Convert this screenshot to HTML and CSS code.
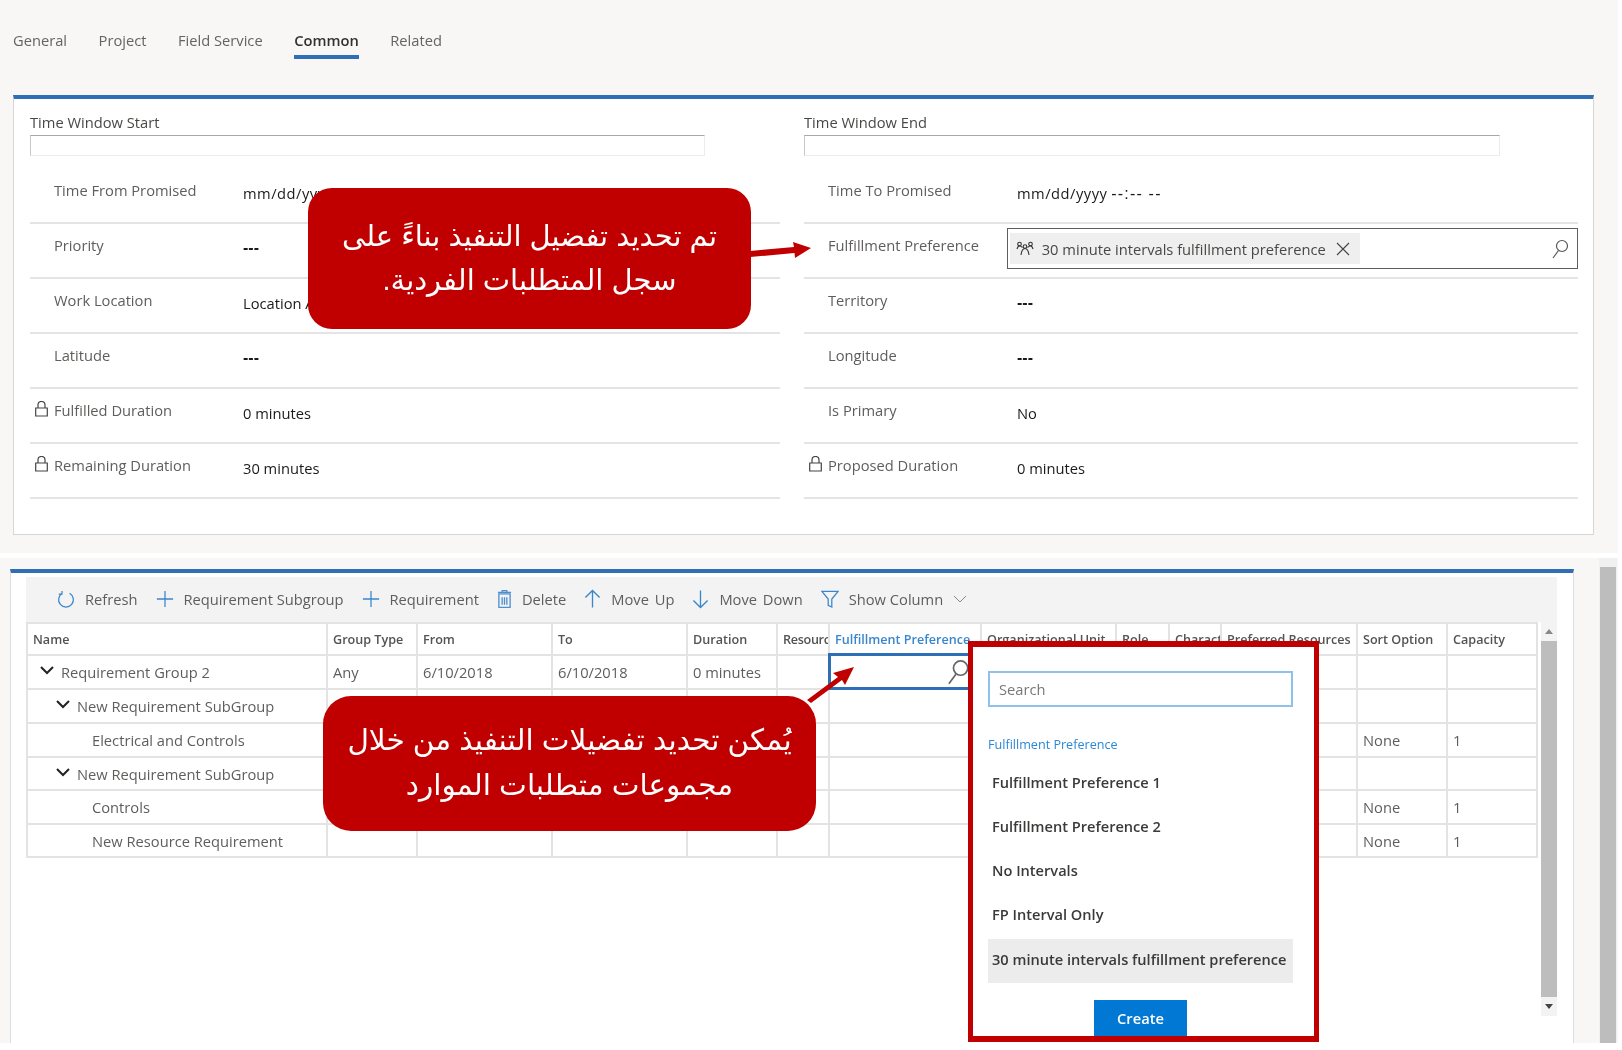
FILE: index.html
```html
<!DOCTYPE html>
<html lang="en">
<head>
  <meta charset="UTF-8">
  <title>Requirement Group</title>
  <link rel="stylesheet" href="styles.css">
</head>
<body>
  <div class="screen">
    <nav class="tabs">
      <a class="tab">General</a>
      <a class="tab">Project</a>
      <a class="tab">Field Service</a>
      <a class="tab active">Common</a>
      <a class="tab">Related</a>
    </nav>

    <section class="card">
      <div class="column">
        <div class="section-label">Time Window Start</div>
        <div class="section-box"></div>
        <div class="row"><span class="slot"></span><span class="label">Time From Promised</span><span class="value"><span class="date">mm/dd/yyyy</span> <span class="dash time">--:-- --</span></span></div>
        <div class="row"><span class="slot"></span><span class="label">Priority</span><span class="value dash">---</span></div>
        <div class="row"><span class="slot"></span><span class="label">Work Location</span><span class="value">Location Agnostic</span></div>
        <div class="row"><span class="slot"></span><span class="label">Latitude</span><span class="value dash">---</span></div>
        <div class="row">
          <span class="slot"><svg class="lock" viewBox="0 0 13 16"><path d="M3 7V4a3.5 3.5 0 0 1 7 0v3M.7 7h11.6v8H.7z"/></svg></span>
          <span class="label">Fulfilled Duration</span><span class="value">0 minutes</span>
        </div>
        <div class="row">
          <span class="slot"><svg class="lock" viewBox="0 0 13 16"><path d="M3 7V4a3.5 3.5 0 0 1 7 0v3M.7 7h11.6v8H.7z"/></svg></span>
          <span class="label">Remaining Duration</span><span class="value">30 minutes</span>
        </div>
      </div>
      <div class="column right">
        <div class="section-label">Time Window End</div>
        <div class="section-box"></div>
        <div class="row"><span class="slot"></span><span class="label">Time To Promised</span><span class="value"><span class="date">mm/dd/yyyy</span> <span class="dash time">--:-- --</span></span></div>
        <div class="row">
          <span class="slot"></span><span class="label">Fulfillment Preference</span>
          <div class="lookup">
            <div class="chip">
              <svg class="people" viewBox="0 0 18 16"><circle cx="3.5" cy="3" r="1.8"/><circle cx="14.5" cy="3" r="1.8"/><circle cx="9" cy="5.5" r="1.8"/><path d="M1 8c.5-2 1.500-3 2.500-3s2 .5 3 1.500M17 8c-.5-2-1.500-3-2.500-3s-2 .5-3 1.500M5 14c.5-4 2-6.500 4-6.500s3.500 2.500 4 6.500"/></svg>
              <span>30 minute intervals fulfillment preference</span>
              <svg class="close" viewBox="0 0 14 14"><path d="M1 1l12 12M13 1L1 13"/></svg>
            </div>
            <svg class="search" viewBox="0 0 18 20"><circle cx="11" cy="7" r="5.500"/><path d="M7.500 11.500L2 19"/></svg>
          </div>
        </div>
        <div class="row"><span class="slot"></span><span class="label">Territory</span><span class="value dash">---</span></div>
        <div class="row"><span class="slot"></span><span class="label">Longitude</span><span class="value dash">---</span></div>
        <div class="row"><span class="slot"></span><span class="label">Is Primary</span><span class="value">No</span></div>
        <div class="row">
          <span class="slot"><svg class="lock" viewBox="0 0 13 16"><path d="M3 7V4a3.5 3.5 0 0 1 7 0v3M.7 7h11.6v8H.7z"/></svg></span>
          <span class="label">Proposed Duration</span><span class="value">0 minutes</span>
        </div>
      </div>
    </section>

    <div class="strip"></div>

    <div class="lower">
      <section class="panel">
        <div class="toolbar">
          <button class="tool"><svg viewBox="0 0 20 20"><path d="M6 3.600a8.200 8.200 0 1 0 8 0M5.500 1v3.500H2"/></svg>Refresh</button>
          <button class="tool"><svg viewBox="0 0 20 20"><path d="M10 1v18M1 10h18"/></svg>Requirement Subgroup</button>
          <button class="tool"><svg viewBox="0 0 20 20"><path d="M10 1v18M1 10h18"/></svg>Requirement</button>
          <button class="tool"><svg class="narrow" viewBox="0 0 16 20"><path d="M2 4.500h12V19H2zM1 3h14M5.500 3V1h5v2M5.500 8v8M8 8v8M10.500 8v8"/></svg>Delete</button>
          <button class="tool spaced"><svg class="arrow" viewBox="0 0 18 20"><path d="M9 1v18M1.500 8.500L9 1l7.500 7.500"/></svg>Move Up</button>
          <button class="tool spaced"><svg class="arrow" viewBox="0 0 18 20"><path d="M9 19V1M1.500 11.500L9 19l7.500-7.500"/></svg>Move Down</button>
          <button class="tool"><svg viewBox="0 0 20 20"><path d="M1 1.500h18l-7 8.500v9l-4-2v-7z"/></svg>Show Column<svg class="caret" viewBox="0 0 14 8"><path d="M1 1l6 6 6-6"/></svg></button>
        </div>
        <div class="grid-wrap">
          <table class="grid">
            <colgroup>
              <col class="c300"><col class="c90"><col class="c135"><col class="c135"><col class="c90"><col class="c52"><col class="c152"><col class="c135"><col class="c53"><col class="c52"><col class="c136"><col class="c90"><col class="c90">
            </colgroup>
            <thead>
              <tr>
                <th>Name</th><th>Group Type</th><th>From</th><th>To</th><th>Duration</th><th class="tight">Resourc</th>
                <th class="current">Fulfillment Preference</th>
                <th>Organizational Unit</th><th>Role</th><th>Charact</th><th>Preferred Resources</th><th>Sort Option</th><th>Capacity</th>
              </tr>
            </thead>
            <tbody>
              <tr class="short">
                <td class="lvl0"><svg class="twist" viewBox="0 0 14 9"><path d="M1 1l6 6 6-6"/></svg>Requirement Group 2</td>
                <td>Any</td><td>6/10/2018</td><td>6/10/2018</td><td>0 minutes</td><td></td>
                <td class="editing"><svg class="search" viewBox="0 0 18 20"><circle cx="11" cy="7" r="5.500"/><path d="M7.500 11.500L2 19"/></svg></td>
                <td></td><td></td><td></td><td></td><td></td><td></td>
              </tr>
              <tr>
                <td class="lvl1"><svg class="twist" viewBox="0 0 14 9"><path d="M1 1l6 6 6-6"/></svg>New Requirement SubGroup</td>
                <td></td><td></td><td></td><td></td><td></td><td></td><td></td><td></td><td></td><td></td><td></td><td></td>
              </tr>
              <tr>
                <td class="lvl2">Electrical and Controls</td>
                <td></td><td></td><td></td><td></td><td></td><td></td><td></td><td></td><td></td><td></td><td>None</td><td>1</td>
              </tr>
              <tr class="short">
                <td class="lvl1"><svg class="twist" viewBox="0 0 14 9"><path d="M1 1l6 6 6-6"/></svg>New Requirement SubGroup</td>
                <td></td><td></td><td></td><td></td><td></td><td></td><td></td><td></td><td></td><td></td><td></td><td></td>
              </tr>
              <tr>
                <td class="lvl2">Controls</td>
                <td></td><td></td><td></td><td></td><td></td><td></td><td></td><td></td><td></td><td></td><td>None</td><td>1</td>
              </tr>
              <tr class="short">
                <td class="lvl2">New Resource Requirement</td>
                <td></td><td></td><td></td><td></td><td></td><td></td><td></td><td></td><td></td><td></td><td>None</td><td>1</td>
              </tr>
            </tbody>
          </table>
          <div class="vscroll">
            <span class="up"></span>
            <span class="thumb"></span>
            <span class="down"></span>
          </div>
        </div>
      </section>
      <div class="outer-scroll"><span class="outer-thumb"></span></div>
    </div>

    <!-- annotations drawn over the screenshot -->
    <div class="callout callout-top" dir="rtl" lang="ar">تم تحديد تفضيل التنفيذ بناءً على<br>سجل المتطلبات الفردية.</div>
    <svg class="pointer pointer-top" viewBox="0 0 62 22"><path d="M0 14l44-4-1-5 18 6-16 10-.5-5L.5 20z"/></svg>

    <div class="callout callout-low" dir="rtl" lang="ar">يُمكن تحديد تفضيلات التنفيذ من خلال<br>مجموعات متطلبات الموارد</div>
    <svg class="pointer pointer-low" viewBox="0 0 50 40"><path d="M0 36l31-23-5-4L47 3 38 21l-3-5L4 39z"/></svg>

    <div class="popup">
      <div class="popup-search">Search</div>
      <div class="popup-head">Fulfillment Preference</div>
      <div class="popup-item">Fulfillment Preference 1</div>
      <div class="popup-item">Fulfillment Preference 2</div>
      <div class="popup-item">No Intervals</div>
      <div class="popup-item">FP Interval Only</div>
      <div class="popup-item selected">30 minute intervals fulfillment preference</div>
      <button class="create">Create</button>
    </div>
  </div>
</body>
</html>
```

FILE: styles.css
```css
html, body {
  margin: 0;
  background: #ffffff;
}
.screen {
  position: relative;
  width: 1618px;
  height: 1043px;
  overflow: hidden;
  background: #f8f7f5;
  font-family: "Open Sans", "Noto Sans", sans-serif;
  font-size: 14.700px;
  color: #605e5c;
  filter: blur(.4px); /* the source is a soft, upscaled capture */
}

/* tabs */
.tabs {
  display: flex;
  gap: 31.500px;
  height: 95px;
  padding: 30px 0 0 13px;
  box-sizing: border-box;
}
.tab {
  height: 29px;
  line-height: 20px;
  box-sizing: border-box;
  color: #666462;
}
.tab.active {
  color: #323130;
  font-weight: 600;
  border-bottom: 4px solid #2f6fb5;
}

/* form card */
.card {
  display: flex;
  gap: 24px;
  width: 1581px;
  height: 440px;
  margin-left: 13px;
  padding: 0 15px 0 16px;
  box-sizing: border-box;
  background: #ffffff;
  border: 1px solid #d6d6d6;
  border-top: 4px solid #2f6fb5;
}
.column {
  width: 750px;
}
.column.right {
  width: 774px;
}
.section-label {
  height: 23px;
  margin-top: 13px;
  line-height: 20px;
  color: #4a4846;
}
.section-box {
  width: 675px;
  height: 21px;
  box-sizing: border-box;
  border: 1px solid #ececec;
  border-top: 1px solid #a8a8a8;
  border-left: 1px solid #c8c8c8;
}
.right .section-box {
  width: 696px;
}
.row {
  display: flex;
  height: 55px;
  box-sizing: border-box;
  border-bottom: 2px solid #e4e4e4;
}
.section-box + .row {
  height: 68px;
  padding-top: 13px;
}
.slot {
  width: 24px;
  padding: 12px 0 0 5px;
  box-sizing: border-box;
}
.lock {
  display: block;
  width: 13px;
  height: 16px;
  fill: none;
  stroke: #444;
  stroke-width: 1.200;
}
.label {
  width: 189px;
  padding-top: 11px;
  line-height: 20px;
  white-space: nowrap;
}
.value {
  padding-top: 14px;
  line-height: 20px;
  color: #1b1a19;
  font-weight: 500;
  white-space: nowrap;
}
.date {
  letter-spacing: .5px;
}
.dash {
  font-family: "Liberation Sans", sans-serif;
  font-size: 16px;
  font-weight: 700;
}
.dash.time {
  letter-spacing: 1.200px;
  font-weight: 400;
}
.lookup {
  display: flex;
  align-items: center;
  justify-content: space-between;
  width: 572px;
  height: 41px;
  margin: 4px 0 0 -10px;
  padding: 0 8px 0 2px;
  box-sizing: border-box;
  border: 1px solid #605e5c;
}
.chip {
  display: flex;
  align-items: center;
  height: 31px;
  padding: 0 10px 0 6px;
  background: #efefef;
  color: #4a4846;
}
.people {
  width: 18px;
  height: 16px;
  margin-right: 8px;
  fill: none;
  stroke: #333;
  stroke-width: 1.100;
}
.close {
  width: 14px;
  height: 14px;
  margin-left: 10px;
  fill: none;
  stroke: #444;
  stroke-width: 1.100;
}
.search {
  width: 18px;
  height: 20px;
  fill: none;
  stroke: #555;
  stroke-width: 1.200;
}

/* white band between the two captures */
.strip {
  height: 5px;
  margin-top: 18px;
  background: #ffffff;
}

/* requirement grid */
.lower {
  display: flex;
  align-items: flex-start;
  height: 485px;
  padding: 11px 0 0 10px;
  box-sizing: border-box;
}
.panel {
  width: 1564px;
  height: 474px;
  padding: 4px 16px 0 15px;
  box-sizing: border-box;
  background: #ffffff;
  border: 1px solid #dedede;
  border-top: 4px solid #2f6fb5;
  border-bottom: 0;
}
.toolbar {
  display: flex;
  align-items: center;
  gap: 18px;
  height: 45px;
  padding: 0 0 2px 31px;
  box-sizing: border-box;
  background: #f3f3f3;
}
.tool {
  display: flex;
  align-items: center;
  gap: 10px;
  padding: 0;
  border: 0;
  background: none;
  font: inherit;
  color: #605e5c;
  white-space: nowrap;
}
.tool.spaced {
  word-spacing: 2px;
}
.tool svg {
  width: 18px;
  height: 20px;
  fill: none;
  stroke: #3a86cc;
  stroke-width: 1.400;
}
.tool svg.narrow {
  width: 15px;
  stroke: #4d8fcf;
}
.tool svg.arrow {
  width: 17px;
}
.tool svg.caret {
  width: 14px;
  height: 8px;
  stroke: #888;
  stroke-width: 1;
}
.grid-wrap {
  display: flex;
  gap: 3px;
}
.grid {
  width: 1510px;
  table-layout: fixed;
  border-collapse: collapse;
  background: #ffffff;
  flex: none;
  align-self: flex-start;
}
.c300 { width: 300px; }
.c90 { width: 90px; }
.c135 { width: 135px; }
.c52 { width: 52px; }
.c53 { width: 53px; }
.c136 { width: 136px; }
.c152 { width: 152px; }
.grid th, .grid td {
  padding: 0 5px;
  overflow: hidden;
  border: 2px solid #e3e3e3;
  white-space: nowrap;
  text-align: left;
}
.grid th {
  height: 27px;
  padding: 2px 0 0 5px;
  font-size: 12.600px;
  font-weight: 600;
  color: #555351;
}
.grid th.tight {
  letter-spacing: -.3px;
}
.grid td {
  height: 32px;
}
.grid tr.short td {
  height: 31px;
}
.grid th.current {
  color: #3a86cc;
  border-bottom: 3px solid #2f6fb5;
}
.grid td.lvl0 { padding-left: 12px; }
.grid td.lvl1 { padding-left: 28px; }
.grid td.lvl2 { padding-left: 64px; }
.twist {
  width: 14px;
  height: 9px;
  margin: 0 7px 3px 0;
  fill: none;
  stroke: #222;
  stroke-width: 2;
}
.grid td.editing {
  padding: 0 10px 0 0;
  border: 3px solid #2f6fb5;
  text-align: right;
}
.editing .search {
  display: block;
  width: 24px;
  height: 26px;
  margin-left: auto;
  stroke: #666;
  stroke-width: 1.300;
}
.vscroll {
  display: flex;
  flex-direction: column;
  align-items: center;
  width: 19px;
  height: 394px;
  background: #f3f3f3;
}
.up, .down {
  flex: none;
  width: 0;
  height: 0;
  margin: 7px 0;
  border: 4px solid transparent;
  border-top: 0;
  border-bottom: 5px solid #888;
}
.down {
  margin: 7px 0;
  border-top: 5px solid #444;
  border-bottom: 0;
}
.thumb {
  flex: 1;
  width: 100%;
  background: #bdbdbd;
}
.outer-scroll {
  width: 18px;
  height: 485px;
  margin: -11px 0 0 25px;
  padding-top: 9px;
  box-sizing: border-box;
  background: #f0f0f0;
}
.outer-thumb {
  display: block;
  width: 16px;
  height: 100%;
  margin-left: 1px;
  background: #bdbdbd;
}

/* annotations */
.callout {
  position: absolute;
  display: flex;
  flex-direction: column;
  justify-content: center;
  text-align: center;
  box-sizing: border-box;
  background: #c00000;
  color: #ffffff;
  font-family: "Liberation Sans", "DejaVu Sans", sans-serif;
}
.callout-top {
  left: 308px;
  top: 188px;
  width: 443px;
  height: 141px;
  padding-bottom: 2px;
  border-radius: 24px;
  font-size: 29px;
  line-height: 44px;
}
.callout-low {
  left: 323px;
  top: 696px;
  width: 493px;
  height: 135px;
  padding-bottom: 4px;
  border-radius: 28px;
  font-size: 29.500px;
  line-height: 45px;
}
.pointer {
  position: absolute;
  fill: #c00000;
}
.pointer-top {
  left: 750px;
  top: 237px;
  width: 62px;
  height: 22px;
}
.pointer-low {
  left: 807px;
  top: 664px;
  width: 50px;
  height: 40px;
}
.popup {
  position: absolute;
  left: 968px;
  top: 641px;
  display: flex;
  flex-direction: column;
  width: 351px;
  height: 401px;
  padding: 24px 21px 0 15px;
  box-sizing: border-box;
  background: #ffffff;
  border: 6px solid #c00000;
  border-width: 6px 5px;
}
.popup-search {
  height: 36px;
  padding-left: 9px;
  line-height: 32px;
  box-sizing: border-box;
  border: 2px solid #8fc1ea;
  color: #7a7876;
}
.popup-head {
  margin-top: 28px;
  line-height: 20px;
  font-size: 12.600px;
  color: #2b88d8;
}
.popup-item {
  height: 44px;
  padding-left: 4px;
  line-height: 38px;
  color: #3b3a39;
  font-size: 14.600px;
  font-weight: 600;
  white-space: nowrap;
}
.popup-head + .popup-item {
  margin-top: 8px;
}
.popup-item.selected {
  line-height: 41px;
  background: #ececec;
}
.create {
  flex: none;
  align-self: center;
  width: 93px;
  height: 36px;
  margin: 17px 0 0 0;
  border: 0;
  background: #0078d4;
  color: #ffffff;
  font: inherit;
  font-weight: 600;
}
```
